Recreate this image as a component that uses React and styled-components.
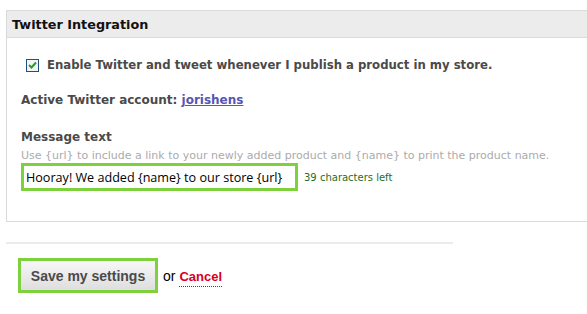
import React, { useState } from 'react';
import styled, { createGlobalStyle } from 'styled-components';

const GlobalStyle = createGlobalStyle`
  html, body {
    margin: 0;
    padding: 0;
    background: #FFFFFF;
  }
`;

const Page = styled.div`
  width: 587px;
  height: 314px;
  overflow: hidden;
  padding: 10px 0 0 6px;
  box-sizing: border-box;
  font-family: "DejaVu Sans", Verdana, sans-serif;
`;

const Panel = styled.section`
  border: 1px solid #DADADA;
  border-right: none;
  height: 212px;
  box-sizing: border-box;
`;

const PanelHeader = styled.h2`
  margin: 0;
  height: 27px;
  box-sizing: border-box;
  background: #ECECEC;
  border-bottom: 1px solid #DADADA;
  padding: 6px 0 0 5px;
  font-size: 12.8px;
  font-weight: bold;
  color: #111111;
`;

const PanelBody = styled.div`
  padding: 20px 0 0 14px;
`;

const CheckRow = styled.label`
  display: flex;
  align-items: center;
  gap: 8px;
  padding-left: 5px;
  font-size: 11.7px;
  font-weight: bold;
  color: #4A4A4A;
`;

const CheckBox = styled.span`
  width: 11px;
  height: 11px;
  border: 1px solid #1C5180;
  background: #F4F4F4;
  display: flex;
  align-items: center;
  justify-content: center;
`;

const Field = styled.div`
  margin-top: ${p => p.gap}px;
  font-size: 12px;
  font-weight: bold;
  color: #4A4A4A;
`;

const Account = styled.a`
  color: #5656B3;
  text-decoration: underline;
  cursor: pointer;
`;

const Hint = styled.p`
  margin: 5px 0 0;
  font-size: 11px;
  font-weight: normal;
  color: #ABABAB;
`;

const InputRow = styled.div`
  display: flex;
  align-items: center;
  gap: 6px;
  margin-top: 1px;
`;

const MessageInput = styled.input`
  width: 277px;
  height: 28px;
  box-sizing: border-box;
  border: 3px solid #7DD13C;
  padding: 0 0 0 2px;
  font-family: "Open Sans", "Noto Sans", sans-serif;
  font-size: 12.6px;
  color: #000000;
  outline: none;
`;

const Counter = styled.span`
  font-size: 10px;
  font-weight: normal;
  color: #1F6E1F;
  padding-top: 1px;
`;

const Rule = styled.hr`
  width: 447px;
  margin: 20px 0 0;
  border: none;
  height: 2px;
  background: #EBEBEB;
`;

const Actions = styled.div`
  display: flex;
  align-items: center;
  gap: 4px;
  padding: 14px 0 0 12px;
  font-family: "Liberation Sans", Arial, sans-serif;
`;

const SaveButton = styled.button`
  width: 140px;
  height: 35px;
  border: 3px solid #7DD13C;
  background: linear-gradient(#F7F7F7, #DEDEDE);
  font-family: "Liberation Sans", Arial, sans-serif;
  font-size: 14px;
  font-weight: bold;
  color: #4A4A4A;
  cursor: pointer;
  padding: 0;
`;

const Or = styled.span`
  font-size: 14px;
  color: #000000;
  margin-left: 1px;
`;

const CancelLink = styled.a`
  font-size: 13px;
  font-weight: bold;
  color: #D8001B;
  text-decoration: none;
  border-bottom: 1px dotted #D8001B;
  padding-bottom: 2px;
  margin-top: 4px;
  cursor: pointer;
`;

const CheckMark = () => (
  <svg width="9" height="8" viewBox="0 0 9 8">
    <path d="M1 4 L3.5 6.5 L8 1.5" fill="none" stroke="#22A022" strokeWidth="2" />
  </svg>
);

const App = () => {
  const [message, setMessage] = useState('Hooray! We added {name} to our store {url}');
  const left = 140 - message.length - 59;

  return (
    <Page>
      <GlobalStyle />
      <Panel>
        <PanelHeader>Twitter Integration</PanelHeader>
        <PanelBody>
          <CheckRow>
            <CheckBox><CheckMark /></CheckBox>
            Enable Twitter and tweet whenever I publish a product in my store.
          </CheckRow>
          <Field gap={21}>
            Active Twitter account: <Account>jorishens</Account>
          </Field>
          <Field gap={23}>
            Message text
            <Hint>Use {'{url}'} to include a link to your newly added product and {'{name}'} to print the product name.</Hint>
            <InputRow>
              <MessageInput value={message} onChange={e => setMessage(e.target.value)} />
              <Counter>{left} characters left</Counter>
            </InputRow>
          </Field>
        </PanelBody>
      </Panel>
      <Rule />
      <Actions>
        <SaveButton>Save my settings</SaveButton>
        <Or>or</Or>
        <CancelLink>Cancel</CancelLink>
      </Actions>
    </Page>
  );
};

export default App;
